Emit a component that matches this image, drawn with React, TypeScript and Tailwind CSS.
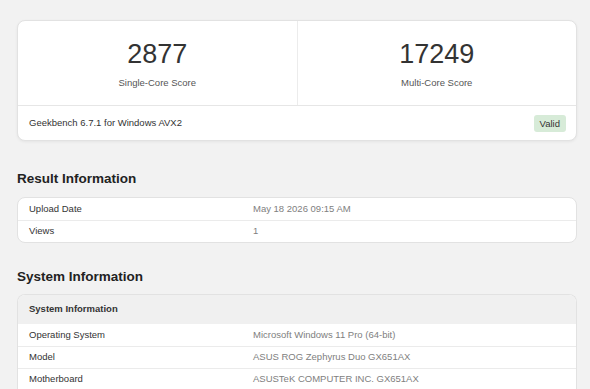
const resultRows = [
  { label: "Upload Date", value: "May 18 2026 09:15 AM" },
  { label: "Views", value: "1" },
];

const systemRows = [
  { label: "Operating System", value: "Microsoft Windows 11 Pro (64-bit)" },
  { label: "Model", value: "ASUS ROG Zephyrus Duo GX651AX" },
  { label: "Motherboard", value: "ASUSTeK COMPUTER INC. GX651AX" },
];

function ScoreCell({ score, label }: { score: string; label: string }) {
  return (
    <div className="flex flex-1 flex-col items-center pt-[17px]">
      <div className="text-[27px] leading-[32px] text-[#333]">{score}</div>
      <div className="mt-[6px] text-[9.5px] leading-[14px] text-[#555]">{label}</div>
    </div>
  );
}

function InfoTable({ rows }: { rows: { label: string; value: string }[] }) {
  return (
    <>
      {rows.map((row, i) => (
        <div
          key={row.label}
          className={`flex h-[22px] items-center text-[9.5px] ${i > 0 ? "border-t border-[#ebebeb]" : ""}`}
        >
          <div className="w-[235px] pl-[11px] text-[#333]">{row.label}</div>
          <div className="text-[#808080]">{row.value}</div>
        </div>
      ))}
    </>
  );
}

export default function App() {
  return (
    <div
      className="min-h-[389px] w-[590px] overflow-hidden bg-[#f2f2f2] pl-[17px] pt-[20px]"
      style={{ fontFamily: '"Liberation Sans", Arial, sans-serif' }}
    >
      <div className="w-[560px] rounded-[8px] border border-[#e2e2e2] bg-white shadow-[0_1px_3px_rgba(0,0,0,0.06)]">
        <div className="flex h-[85px] border-b border-[#e6e6e6]">
          <ScoreCell score="2877" label="Single-Core Score" />
          <div className="w-px bg-[#ececec]" />
          <ScoreCell score="17249" label="Multi-Core Score" />
        </div>
        <div className="flex h-[34px] items-center justify-between pl-[11px] pr-[10px]">
          <span className="text-[9.5px] text-[#333]">Geekbench 6.7.1 for Windows AVX2</span>
          <span className="rounded-[3px] bg-[#d7ebd8] px-[6px] py-[4px] text-[9.5px] leading-[9px] text-[#333]">
            Valid
          </span>
        </div>
      </div>

      <h2 className="mt-[29px] text-[13.5px] font-bold leading-[18px] text-[#222]">Result Information</h2>
      <div className="mt-[9px] w-[560px] overflow-hidden rounded-[8px] border border-[#e2e2e2] bg-white">
        <InfoTable rows={resultRows} />
      </div>

      <h2 className="mt-[25px] text-[13.5px] font-bold leading-[18px] text-[#222]">System Information</h2>
      <div className="mt-[8px] w-[560px] overflow-hidden rounded-t-[8px] border border-b-0 border-[#e2e2e2] bg-white">
        <div className="flex h-[29px] items-center bg-[#f0f0f0] pl-[11px] text-[9.5px] font-bold text-[#333]">
          System Information
        </div>
        <InfoTable rows={systemRows} />
      </div>
    </div>
  );
}
